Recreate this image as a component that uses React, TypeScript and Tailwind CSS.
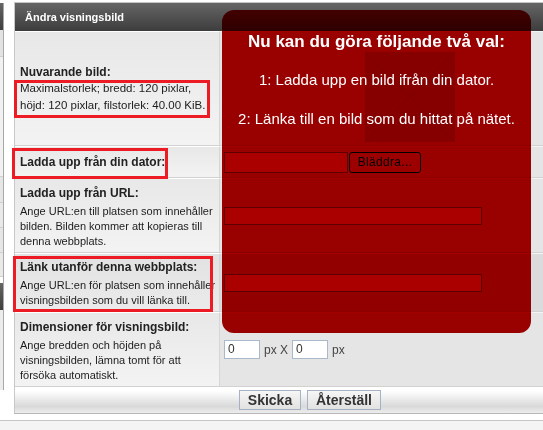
import React from "react";

function Sidebar() {
  return (
    <div className="w-[4px] shrink-0 border-r border-[#a8a8a8] h-[387px] mt-[3px] flex flex-col">
      <div className="h-[27px] bg-gradient-to-b from-[#666666] to-[#3e3e3e]" />
      <div className="h-[27px] bg-[#e2e2e2] border-b border-[#cfcfcf]" />
      <div className="h-[120px] bg-[#f1f1f1] border-b border-[#cfcfcf]" />
      <div className="h-[26px] bg-[#e6e6e6] border-b border-[#cfcfcf]" />
      <div className="h-[25px] bg-[#e9e9e9] border-b border-[#cfcfcf]" />
      <div className="h-[25px] bg-[#e6e6e6] border-b border-[#cfcfcf]" />
      <div className="h-[24px] bg-[#e9e9e9] border-b border-[#cfcfcf]" />
      <div className="h-[6px] bg-white" />
      <div className="h-[27px] bg-gradient-to-b from-[#666666] to-[#3e3e3e]" />
      <div className="flex-1 bg-[#ececec]" />
    </div>
  );
}

type RowProps = {
  height: string;
  label: React.ReactNode;
  value?: React.ReactNode;
  dark?: boolean;
};

function Row({ height, label, value, dark }: RowProps) {
  return (
    <div className={`flex ${height} border-b border-[#d2d2d2]`}>
      <div
        className={`w-[205px] shrink-0 flex items-center pl-[5px] border-r border-[#d6d6d6] border-t border-t-white bg-gradient-to-b ${
          dark ? "from-[#e2e2e2] to-[#ebebeb]" : "from-[#e8e8e8] to-[#f3f3f3]"
        }`}
      >
        <div className="w-full whitespace-nowrap">{label}</div>
      </div>
      <div
        className={`flex-1 flex items-center pl-[4px] border-t border-t-[#f4f4f4] ${
          dark ? "bg-[#dbdbdb]" : "bg-[#e5e5e5]"
        }`}
      >
        {value}
      </div>
    </div>
  );
}

function Title({ children, lead = "leading-[21px]" }: { children: React.ReactNode; lead?: string }) {
  return <div className={`text-[12px] font-bold text-[#222222] ${lead}`}>{children}</div>;
}

function Desc({ children }: { children: React.ReactNode }) {
  return <div className="text-[11px] leading-[15px] text-[#1c1c1c]">{children}</div>;
}

function UrlInput() {
  return <div className="w-[258px] h-[18px] bg-white border border-[#8c8c8c]" />;
}

function DimInput() {
  return (
    <div className="w-[36px] h-[19px] bg-white border border-[#a9b9c9] text-[12px] leading-[17px] pl-[3px] text-[#333333]">
      0
    </div>
  );
}

function FooterButton({ children, width }: { children: React.ReactNode; width: string }) {
  return (
    <div
      className={`${width} h-[20px] border border-[#a3b3c3] bg-gradient-to-b from-[#f6f6f6] to-[#e1e1e1] flex items-center justify-center text-[14px] font-bold text-[#333333]`}
    >
      {children}
    </div>
  );
}

export default function App() {
  return (
    <div className="relative w-[543px] h-[430px] overflow-hidden bg-white font-['Liberation_Sans',Arial,sans-serif]">
      <div className="flex h-[420px]">
        <Sidebar />
        <div className="ml-[10px] mt-[2px] w-[540px] shrink-0 self-start border-l border-t border-b border-l-[#c8c8c8] border-t-[#c4c4c4] border-b-[#b8b8b8] flex flex-col">
          {/* panel heading */}
          <div className="h-[28px] bg-gradient-to-b from-[#666666] to-[#3d3d3d] flex items-center pl-[10px] text-[11px] font-bold text-white">
            Ändra visningsbild
          </div>

          <Row
            height="h-[115px]"
            label={
              <>
                <Title lead="leading-[16px]">Nuvarande bild:</Title>
                <div className="text-[11.5px] leading-[17px] text-[#1c1c1c]">
                  Maximalstorlek; bredd: 120 pixlar,
                  <br />
                  höjd: 120 pixlar, filstorlek: 40.00 KiB.
                </div>
              </>
            }
          />

          <Row
            height="h-[32px]"
            label={<Title lead="leading-[18px]">Ladda upp från din dator:</Title>}
            value={
              <div className="flex items-center gap-[1px]">
                <div className="w-[124px] h-[21px] bg-white border border-[#8f8f8f]" />
                <div className="w-[72px] h-[21px] rounded-[3px] border border-black bg-[#ececec] flex items-center justify-center text-[12px] tracking-[0.3px] text-black">
                  Bläddra...
                </div>
              </div>
            }
          />

          <Row
            height="h-[75px]"
            label={
              <>
                <Title>Ladda upp från URL:</Title>
                <Desc>
                  Ange URL:en till platsen som innehåller
                  <br />
                  bilden. Bilden kommer att kopieras till
                  <br />
                  denna webbplats.
                </Desc>
              </>
            }
            value={<UrlInput />}
          />

          <Row
            height="h-[59px]"
            dark
            label={
              <>
                <Title>Länk utanför denna webbplats:</Title>
                <Desc>
                  Ange URL:en för platsen som innehåller
                  <br />
                  visningsbilden som du vill länka till.
                </Desc>
              </>
            }
            value={<UrlInput />}
          />

          <Row
            height="h-[75px]"
            label={
              <>
                <Title>Dimensioner för visningsbild:</Title>
                <Desc>
                  Ange bredden och höjden på
                  <br />
                  visningsbilden, lämna tomt för att
                  <br />
                  försöka automatiskt.
                </Desc>
              </>
            }
            value={
              <div className="flex items-center text-[12px] text-[#444444]">
                <DimInput />
                <span className="mx-[4px]">px X</span>
                <DimInput />
                <span className="ml-[4px]">px</span>
              </div>
            }
          />

          {/* form actions */}
          <div className="h-[26px] flex items-center gap-[6px] pl-[224px] bg-[linear-gradient(to_bottom,#ffffff_0%,#ffffff_15%,#d9d9d9_75%,#ededed_100%)]">
            <FooterButton width="w-[62px]">Skicka</FooterButton>
            <FooterButton width="w-[74px]">Återställ</FooterButton>
          </div>
        </div>
      </div>
      <div className="h-[10px] border-t border-[#c6c6c6] bg-[#f4f4f4]" />

      {/* notice bubble: tint layer over the form */}
      <div className="absolute left-[222px] top-[31px] w-[309px] h-[302px] rounded-b-[12px] bg-[#aa0000] mix-blend-multiply" />
      {/* notice bubble: part lying over the panel heading */}
      <div className="absolute z-10 left-[222px] top-[10px] w-[309px] h-[21px] rounded-t-[12px] bg-gradient-to-b from-[#420000] to-[#2e0000]" />
      {/* notice bubble: content layer */}
      <div className="absolute z-20 left-[222px] top-[10px] w-[309px] h-[323px] text-white text-center">
        <div className="absolute left-[143px] top-[42px] w-[90px] h-[90px] bg-[rgba(0,0,0,0.12)]">
          <svg width="90" height="90" viewBox="0 0 90 90" className="block">
            <line x1="0" y1="0" x2="90" y2="90" stroke="rgba(0,0,0,0.07)" strokeWidth="1" />
            <line x1="90" y1="0" x2="0" y2="90" stroke="rgba(0,0,0,0.07)" strokeWidth="1" />
          </svg>
        </div>
        <div className="relative pt-[22px]">
          <div className="text-[17px] font-bold leading-[20px]">Nu kan du göra följande två val:</div>
          <div className="mt-[19px] text-[15px] leading-[18px]">1: Ladda upp en bild ifrån din dator.</div>
          <div className="mt-[21px] text-[15px] leading-[18px]">2: Länka till en bild som du hittat på nätet.</div>
        </div>
      </div>

      {/* highlight frames */}
      <div className="absolute z-30 left-[14px] top-[80px] w-[196px] h-[38px] border-[3px] border-[#ed1c24]" />
      <div className="absolute z-30 left-[12px] top-[148px] w-[156px] h-[31px] border-[3px] border-[#ed1c24]" />
      <div className="absolute z-30 left-[13px] top-[256px] w-[200px] h-[56px] border-[3px] border-[#ed1c24]" />
    </div>
  );
}
